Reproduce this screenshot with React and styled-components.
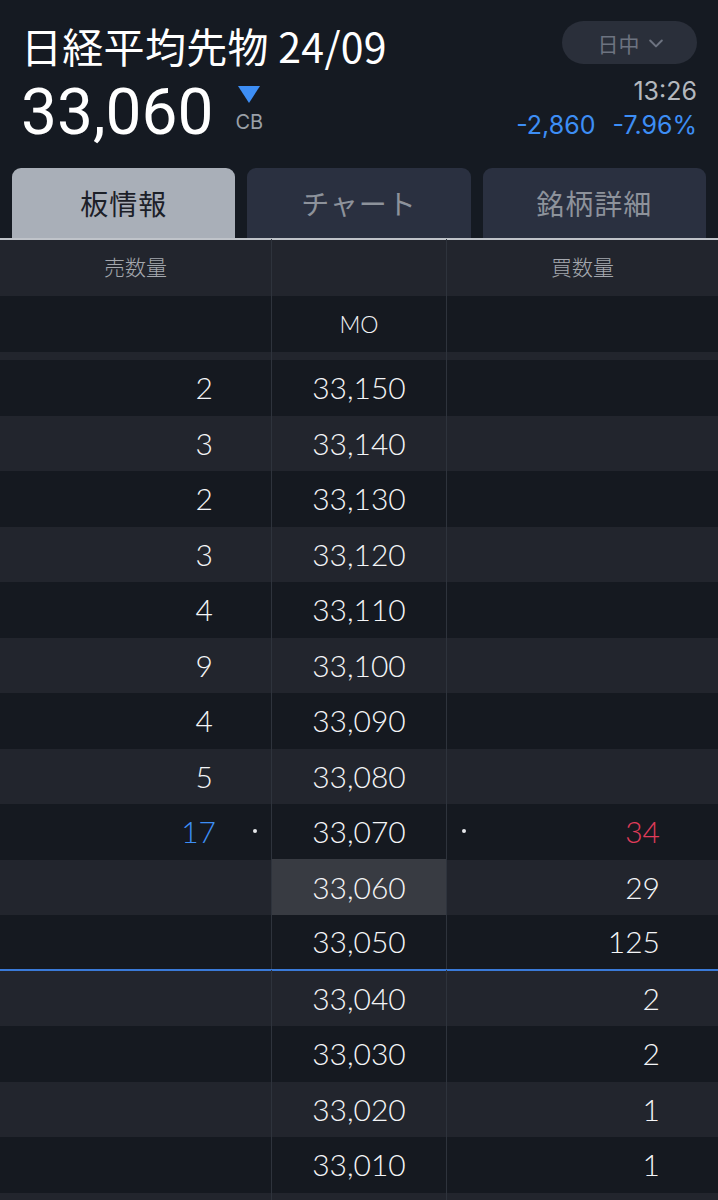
import styled, { createGlobalStyle } from "styled-components";

const GlobalStyle = createGlobalStyle`
  html, body {
    margin: 0;
    padding: 0;
    background: #151a22;
  }
  body {
    font-family: "Noto Sans CJK JP", "Noto Sans", sans-serif;
    color: #ffffff;
  }
`;

const Page = styled.div`
  width: 718px;
  height: 1200px;
  overflow: hidden;
  background: #151a22;
`;

const Header = styled.div`
  display: flex;
  justify-content: space-between;
  padding: 17px 21px 0 21px;
  height: 148px;
  box-sizing: border-box;
`;

const Left = styled.div`
  display: flex;
  flex-direction: column;
`;

const Title = styled.h1`
  margin: 0;
  font-size: 41px;
  font-weight: 400;
  line-height: 56px;
  letter-spacing: 0.3px;
`;

const PriceRow = styled.div`
  display: flex;
  align-items: flex-start;
  gap: 22px;
  margin-top: 5px;
`;

const Price = styled.div`
  font-family: Roboto, "Noto Sans", sans-serif;
  font-size: 64px;
  font-weight: 400;
  line-height: 70px;
`;

const Mark = styled.div`
  display: flex;
  flex-direction: column;
  align-items: center;
  padding-top: 8px;
  gap: 9px;
`;

const Triangle = styled.div`
  width: 0;
  height: 0;
  border-left: 11px solid transparent;
  border-right: 11px solid transparent;
  border-top: 17px solid #3d8ef5;
`;

const MarkText = styled.span`
  font-family: Inter, sans-serif;
  font-size: 20px;
  line-height: 20px;
  color: #9aa0a8;
`;

const Right = styled.div`
  display: flex;
  flex-direction: column;
  align-items: flex-end;
`;

const Pill = styled.button`
  display: flex;
  align-items: center;
  justify-content: center;
  gap: 6px;
  width: 135px;
  height: 43px;
  margin-top: 4px;
  border: none;
  border-radius: 22px;
  background: #2a2f3a;
  color: #6d7380;
  font-family: "Noto Sans CJK JP", sans-serif;
  font-size: 21px;
  padding: 0 0 0 4px;
`;

const Time = styled.div`
  margin-top: 12px;
  font-family: Inter, sans-serif;
  font-size: 25px;
  line-height: 30px;
  color: #b4b8be;
`;

const Change = styled.div`
  display: flex;
  gap: 17px;
  margin-top: 4px;
  font-family: Inter, sans-serif;
  font-size: 25px;
  line-height: 30px;
  color: #3d8ef5;
`;

const Tabs = styled.div`
  display: grid;
  grid-template-columns: repeat(3, 1fr);
  gap: 12px;
  padding: 0 12px;
  margin-top: 20px;
  border-bottom: 2px solid #bfc3c9;
`;

const Tab = styled.div`
  height: 70px;
  display: flex;
  align-items: center;
  justify-content: center;
  border-radius: 9px 9px 0 0;
  background: ${(p) => (p.$active ? "#a9afb8" : "#2a3040")};
  color: ${(p) => (p.$active ? "#1c2028" : "#8d929b")};
  font-size: 28px;
  letter-spacing: 1px;
`;

const Row = styled.div`
  display: grid;
  grid-template-columns: 271px 175px 1fr;
  height: ${(p) => p.$h || "55.5px"};
  box-sizing: border-box;
  background: ${(p) => (p.$alt ? "#22252d" : "#151920")};
  border-bottom: ${(p) => (p.$line ? "2px solid #3a7ad8" : "none")};
`;

const Cell = styled.div`
  display: flex;
  align-items: center;
  justify-content: ${(p) => p.$justify || "center"};
  padding: ${(p) => p.$pad || "0"};
  gap: ${(p) => p.$gap || "0"};
  border-left: ${(p) => (p.$divider ? "1px solid #2e333c" : "none")};
  background: ${(p) => (p.$hl ? "#383b42" : "transparent")};
  font-family: Lato, "Noto Sans", sans-serif;
  font-size: 30px;
  font-weight: 300;
  color: #f4f5f7;
  margin-top: -1px;
`;

const HeadText = styled.span`
  font-family: "Noto Sans CJK JP", sans-serif;
  font-size: 21px;
  color: #a4a8ae;
  margin-top: -4px;
`;

const MoText = styled.span`
  font-family: Lato, sans-serif;
  font-size: 23px;
  color: #f2f3f5;
`;

const Qty = styled.span`
  color: ${(p) => p.$color || "#f4f5f7"};
`;

const Dot = styled.span`
  width: 4px;
  height: 4px;
  border-radius: 50%;
  background: #e6e7ea;
`;

const rows = [
  { price: "33,150", sell: "2" },
  { price: "33,140", sell: "3" },
  { price: "33,130", sell: "2" },
  { price: "33,120", sell: "3" },
  { price: "33,110", sell: "4" },
  { price: "33,100", sell: "9" },
  { price: "33,090", sell: "4" },
  { price: "33,080", sell: "5" },
  { price: "33,070", sell: "17", buy: "34", mid: true },
  { price: "33,060", buy: "29", hl: true },
  { price: "33,050", buy: "125", line: true },
  { price: "33,040", buy: "2" },
  { price: "33,030", buy: "2" },
  { price: "33,020", buy: "1" },
  { price: "33,010", buy: "1" },
  { price: "", buy: "" },
];

function Chevron() {
  return (
    <svg width="20" height="20" viewBox="0 0 24 24" fill="none" stroke="#6d7380" strokeWidth="2.4" strokeLinecap="round" strokeLinejoin="round">
      <path d="M5 9l7 7 7-7" />
    </svg>
  );
}

export default function App() {
  return (
    <Page>
      <GlobalStyle />
      <Header>
        <Left>
          <Title>日経平均先物 24/09</Title>
          <PriceRow>
            <Price>33,060</Price>
            <Mark>
              <Triangle />
              <MarkText>CB</MarkText>
            </Mark>
          </PriceRow>
        </Left>
        <Right>
          <Pill>
            日中 <Chevron />
          </Pill>
          <Time>13:26</Time>
          <Change>
            <span>-2,860</span>
            <span>-7.96%</span>
          </Change>
        </Right>
      </Header>

      <Tabs>
        <Tab $active>板情報</Tab>
        <Tab>チャート</Tab>
        <Tab>銘柄詳細</Tab>
      </Tabs>

      <Row $alt $h="56px">
        <Cell><HeadText>売数量</HeadText></Cell>
        <Cell $divider />
        <Cell $divider><HeadText>買数量</HeadText></Cell>
      </Row>
      <Row $h="56px">
        <Cell />
        <Cell $divider><MoText>MO</MoText></Cell>
        <Cell $divider />
      </Row>
      <Row $alt $h="8px">
        <Cell />
        <Cell $divider />
        <Cell $divider />
      </Row>

      {rows.map((r, i) => (
        <Row key={i} $alt={i % 2 === 1} $line={r.line}>
          <Cell $justify="flex-end" $pad={r.mid ? "0 14px 0 0" : "0 58px 0 0"} $gap="37px">
            {r.sell && <Qty $color={r.mid ? "#3d8ef5" : undefined}>{r.sell}</Qty>}
            {r.mid && <Dot />}
          </Cell>
          <Cell $divider $hl={r.hl}>{r.price}</Cell>
          <Cell $divider $justify="space-between" $pad="0 58px 0 15px">
            {r.mid ? <Dot /> : <span />}
            {r.buy && <Qty $color={r.mid ? "#e03c5a" : undefined}>{r.buy}</Qty>}
          </Cell>
        </Row>
      ))}
    </Page>
  );
}
